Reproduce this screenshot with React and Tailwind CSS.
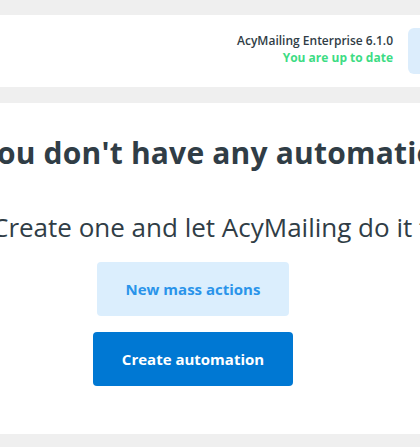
import React from 'react';

function VersionHeader() {
  return (
    <div className="mt-[15px] h-[72px] w-[460px] bg-white flex items-center justify-end gap-[15px]">
      <div className="pb-[5px] text-right text-[12px] leading-[17px]">
        <div className="font-semibold text-[#303d46]">AcyMailing Enterprise 6.1.0</div>
        <div className="font-bold text-[#3ddc84]">You are up to date</div>
      </div>
      <div className="w-[52px] h-[46px] rounded-[6px] bg-[#dcedfc]" />
    </div>
  );
}

function EmptyAutomations() {
  return (
    <div className="mt-[16px] h-[331px] w-[460px] bg-white">
      <div className="w-[386px] pt-[32px] flex flex-col items-center text-[#303d46]">
        {/* Title and hint run past the card edges */}
        <h1 className="self-start ml-[-22px] whitespace-nowrap text-[30px] leading-[36px] font-bold tracking-[0.2px]">
          You don't have any automation yet!
        </h1>
        <p className="self-start ml-[-8px] mt-[40px] whitespace-nowrap text-[26px] leading-[32px]">
          Create one and let AcyMailing do it for you!
        </p>
        <button className="mt-[19px] w-[192px] h-[54px] rounded-[4px] bg-[#dbeefd] text-[15px] font-bold text-[#2a94ea]">
          New mass actions
        </button>
        <button className="mt-[16px] w-[200px] h-[54px] rounded-[4px] bg-[#0078d3] text-[15px] font-bold text-white">
          Create automation
        </button>
      </div>
    </div>
  );
}

export default function App() {
  return (
    <div
      className="w-[420px] h-[447px] overflow-hidden bg-[#efefef]"
      style={{ fontFamily: '"Open Sans", "Noto Sans", sans-serif' }}
    >
      <VersionHeader />
      <EmptyAutomations />
    </div>
  );
}
